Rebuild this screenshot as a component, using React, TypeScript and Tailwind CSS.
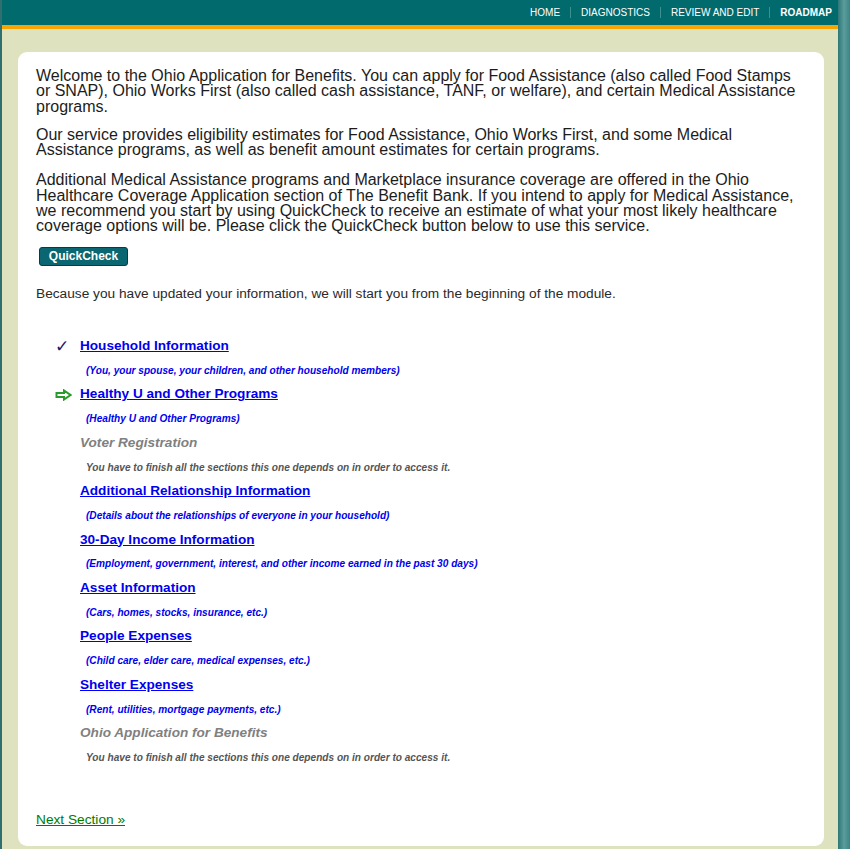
import { ReactNode } from "react";

const sections = [
  { title: "Household Information", desc: "(You, your spouse, your children, and other household members)", state: "done" },
  { title: "Healthy U and Other Programs", desc: "(Healthy U and Other Programs)", state: "current" },
  { title: "Voter Registration", desc: "You have to finish all the sections this one depends on in order to access it.", state: "locked" },
  { title: "Additional Relationship Information", desc: "(Details about the relationships of everyone in your household)", state: "open" },
  { title: "30-Day Income Information", desc: "(Employment, government, interest, and other income earned in the past 30 days)", state: "open" },
  { title: "Asset Information", desc: "(Cars, homes, stocks, insurance, etc.)", state: "open" },
  { title: "People Expenses", desc: "(Child care, elder care, medical expenses, etc.)", state: "open" },
  { title: "Shelter Expenses", desc: "(Rent, utilities, mortgage payments, etc.)", state: "open" },
  { title: "Ohio Application for Benefits", desc: "You have to finish all the sections this one depends on in order to access it.", state: "locked" },
];

const navItems = ["HOME", "DIAGNOSTICS", "REVIEW AND EDIT", "ROADMAP"];

const Arrow = () => (
  <svg width="17" height="12" viewBox="0 0 17 12" className="block">
    <path
      d="M1.5 4 H9 V1.5 L15.5 6 L9 10.5 V8 H1.5 Z"
      fill="none"
      stroke="#2a9a2a"
      strokeWidth="2"
      strokeLinejoin="miter"
    />
  </svg>
);

const StatusIcon = ({ state }: { state: string }): ReactNode => {
  if (state === "done")
    return <span className="ml-[19px] text-[17px] leading-none text-[#1a1a6a]">✓</span>;
  if (state === "current")
    return (
      <span className="ml-[19px]">
        <Arrow />
      </span>
    );
  return null;
};

export default function App() {
  return (
    <div className="w-[850px] h-[849px] flex bg-[#dfe2bf] overflow-hidden font-['Liberation_Sans',Arial,sans-serif]">
      {/* left edge */}
      <div className="w-[2px] h-full bg-[#2f6f6f] shrink-0" />

      <div className="flex-1 flex flex-col min-w-0">
        {/* Top nav */}
        <div className="h-[25px] bg-[#016a6d] flex items-center justify-end pr-[6px]">
          {navItems.map((item, i) => (
            <div key={item} className="flex items-center">
              {i > 0 && <span className="w-px h-[11px] bg-[#3f8f8f] mx-[10px]" />}
              <span
                className={`text-[10px] text-white ${item === "ROADMAP" ? "font-bold" : ""}`}
              >
                {item}
              </span>
            </div>
          ))}
        </div>
        <div className="h-[4px] bg-[#f7a400]" />

        {/* Card */}
        <div className="flex-1 pt-[23px] pl-[16px] pr-[14px] pb-[3px]">
          <div className="h-full bg-white rounded-[9px] pt-[16px] px-[18px] text-[#1c1c1c]">
            <p className="text-[16px] leading-[15.3px]">
              Welcome to the Ohio Application for Benefits. You can apply for Food Assistance (also called Food Stamps
              or SNAP), Ohio Works First (also called cash assistance, TANF, or welfare), and certain Medical Assistance
              programs.
            </p>
            <p className="text-[16px] leading-[15.3px] mt-[13px]">
              Our service provides eligibility estimates for Food Assistance, Ohio Works First, and some Medical
              Assistance programs, as well as benefit amount estimates for certain programs.
            </p>
            <p className="text-[16px] leading-[15.3px] mt-[15px]">
              Additional Medical Assistance programs and Marketplace insurance coverage are offered in the Ohio
              Healthcare Coverage Application section of The Benefit Bank. If you intend to apply for Medical Assistance,
              we recommend you start by using QuickCheck to receive an estimate of what your most likely healthcare
              coverage options will be. Please click the QuickCheck button below to use this service.
            </p>

            <button className="mt-[13px] ml-[3px] w-[89px] h-[19px] bg-[#0a6670] border border-[#0b3b40] rounded-[3px] text-white text-[12px] font-bold leading-none">
              QuickCheck
            </button>

            <p className="mt-[19px] text-[13.7px] leading-[16px] text-[#2a2a2a]">
              Because you have updated your information, we will start you from the beginning of the module.
            </p>

            {/* Roadmap */}
            <div className="mt-[32px]">
              {sections.map((s) => (
                <div key={s.title}>
                  <div className="flex items-center h-[24px]">
                    <div className="w-[44px] flex items-center">
                      <StatusIcon state={s.state} />
                    </div>
                    {s.state === "locked" ? (
                      <span className="text-[13.6px] font-bold italic text-[#808080]">{s.title}</span>
                    ) : (
                      <a href="#" className="text-[13.6px] font-bold text-[#0000ee] underline">
                        {s.title}
                      </a>
                    )}
                  </div>
                  <div
                    className={`h-[24.4px] flex items-center pl-[50px] text-[10.1px] font-bold italic ${
                      s.state === "locked" ? "text-[#555555]" : "text-[#0000ee]"
                    }`}
                  >
                    {s.desc}
                  </div>
                </div>
              ))}
            </div>

            <a href="#" className="block mt-[42px] text-[13.7px] leading-[16px] text-[#007a00] underline">
              Next Section »
            </a>
          </div>
        </div>
      </div>

      {/* right edge */}
      <div className="w-[12px] h-full shrink-0 bg-gradient-to-r from-[#2d7777] via-[#5b9c9c] to-[#3c8585]" />
    </div>
  );
}
